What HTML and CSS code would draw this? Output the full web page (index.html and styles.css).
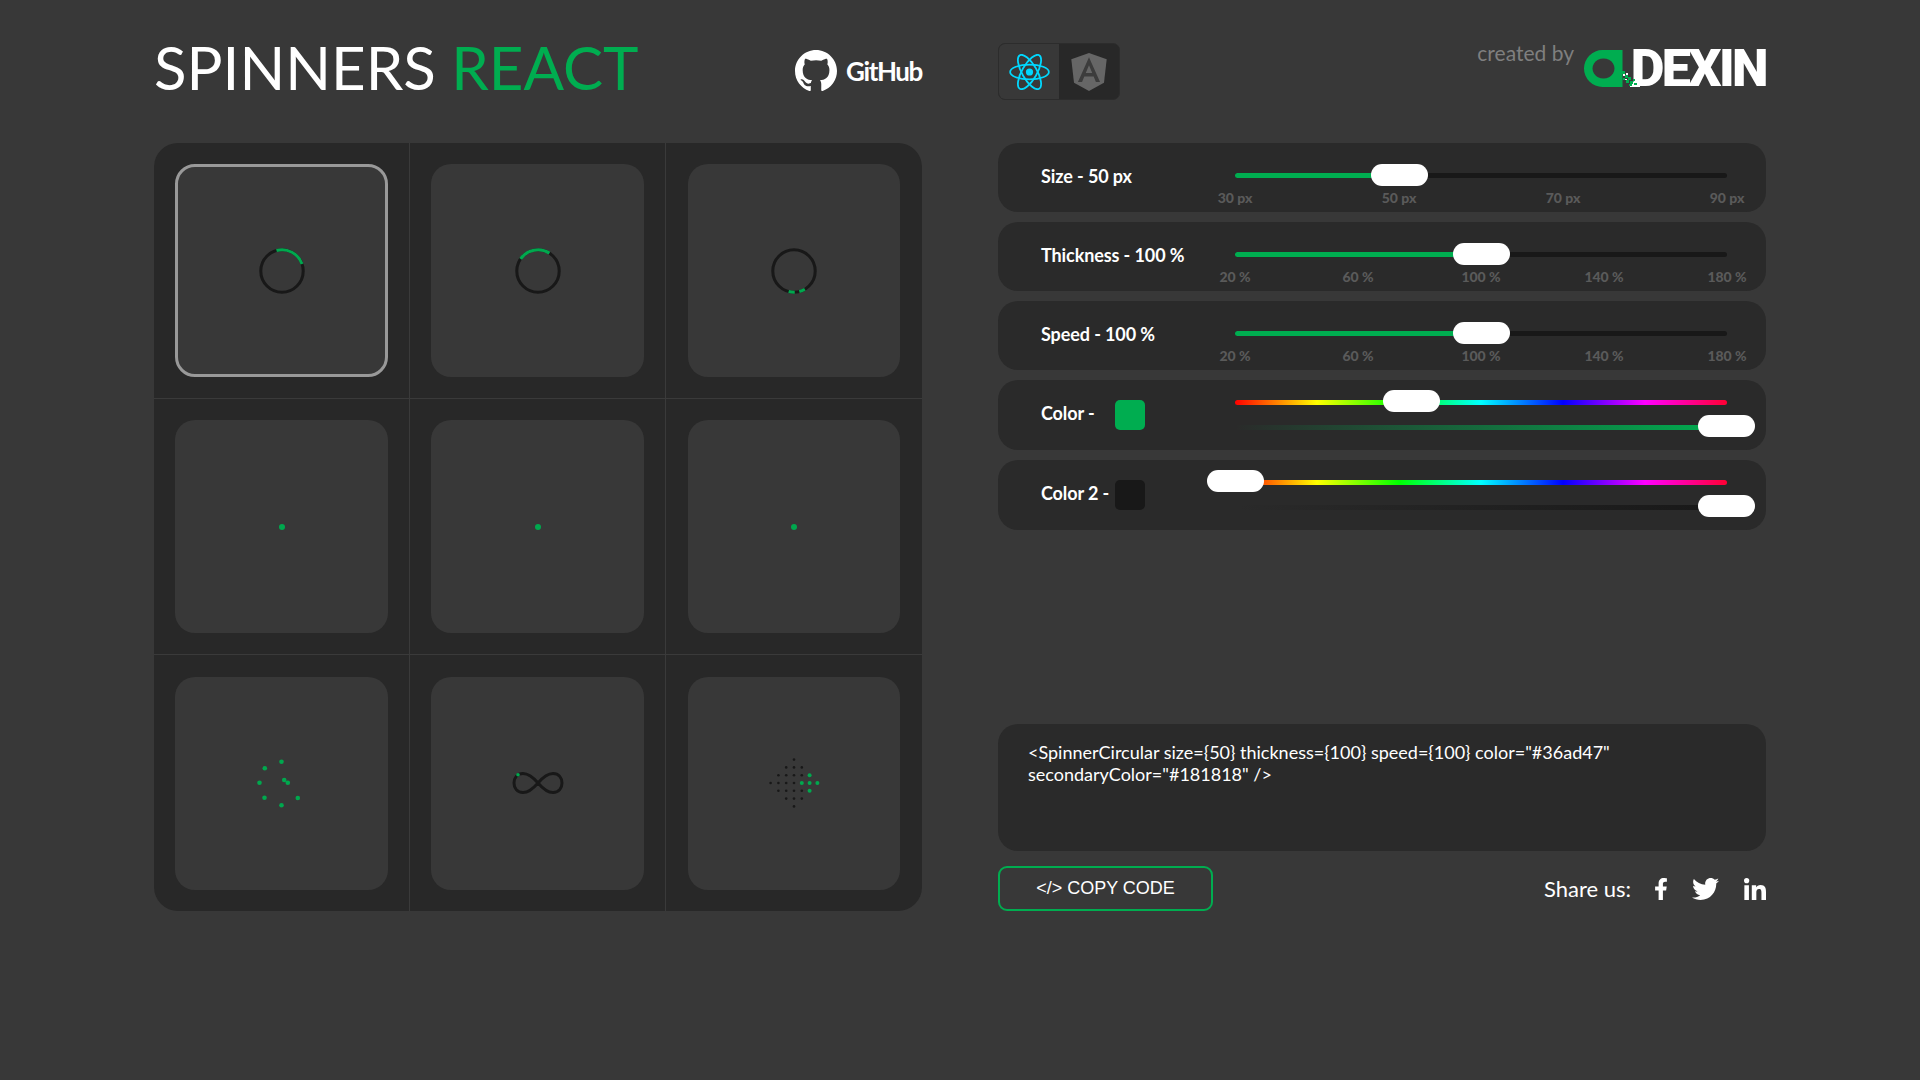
FILE: index.html
```html
<!DOCTYPE html>
<html lang="en">
	<head>
		<meta charset="UTF-8" />
		<title>Spinners React</title>
		<link rel="stylesheet" href="styles.css">
	</head>
	<body>
		<div class="page">
			<header class="head head-left">
				<h1 class="title">SPINNERS <span class="green">REACT</span></h1>
				<a class="github">
					<svg class="github-mark" viewBox="0 0 16 16"><path fill="#fff" d="M8 0C3.58 0 0 3.58 0 8c0 3.54 2.29 6.53 5.47 7.59.4.07.55-.17.55-.38 0-.19-.01-.82-.01-1.49-2.01.37-2.53-.49-2.69-.94-.09-.23-.48-.94-.82-1.13-.28-.15-.68-.52-.01-.53.63-.01 1.08.58 1.23.82.72 1.21 1.87.87 2.33.66.07-.52.28-.87.51-1.07-1.78-.2-3.64-.89-3.64-3.95 0-.87.31-1.59.82-2.15-.08-.2-.36-1.02.08-2.12 0 0 .67-.21 2.2.82.64-.18 1.32-.27 2-.27.68 0 1.36.09 2 .27 1.53-1.04 2.2-.82 2.2-.82.44 1.1.16 1.92.08 2.12.51.56.82 1.27.82 2.15 0 3.07-1.87 3.75-3.65 3.95.29.25.54.73.54 1.48 0 1.07-.01 1.93-.01 2.2 0 .21.15.46.55.38A8.013 8.013 0 0016 8c0-4.42-3.58-8-8-8z"/></svg>
					<span class="github-text">GitHub</span>
				</a>
			</header>

			<header class="head head-right">
				<div class="switch">
					<div class="switch-item active">
						<svg class="react-icon" viewBox="-11.5 -10.23 23 20.46">
							<circle r="2.05" fill="#00d8ff"/>
							<g fill="none" stroke="#00d8ff" stroke-width="1">
								<ellipse rx="11" ry="4.2"/>
								<ellipse rx="11" ry="4.2" transform="rotate(60)"/>
								<ellipse rx="11" ry="4.2" transform="rotate(120)"/>
							</g>
						</svg>
					</div>
					<div class="switch-item">
						<svg class="angular-icon" viewBox="31 30 188 200">
							<polygon fill="#666" points="125,30 31.9,63.2 46.1,186.3 125,230 203.9,186.3 218.1,63.2"/>
							<path fill="#3c3c3c" fill-rule="evenodd" d="M125 52.1L66.8 182.6h21.7l11.7-29.2h49.4l11.7 29.2H183zM142 135.4h-34l17-40.9z"/>
						</svg>
					</div>
				</div>
				<div class="credit">
					<span class="credit-text">created by</span>
					<span class="brand">
						<span class="brand-name">DEXIN</span>
						<svg class="brand-mark" viewBox="0 0 62 37">
							<path fill="#00ad50" fill-rule="evenodd" d="M18.500 0H38.500V37H18.500A18.500 18.500 0 0 1 18.500 0ZM19.500 8.500A11 10 0 1 0 19.510 8.500Z"/>
							<rect x="46" y="32" width="10" height="5" fill="#fff"/>
							<g fill="#00ad50">
								<rect x="38" y="21" width="3" height="3"/>
								<rect x="41" y="25" width="3" height="3"/>
								<rect x="39" y="28" width="2" height="2"/>
								<rect x="44" y="27" width="3" height="3"/>
								<rect x="42" y="30" width="3" height="3"/>
								<rect x="46" y="31" width="3" height="3"/>
								<rect x="49" y="29" width="2" height="2"/>
								<rect x="45" y="34" width="3" height="2"/>
								<rect x="50" y="33" width="3" height="2"/>
							</g>
							<g fill="#fff">
								<rect x="39" y="24" width="2" height="2"/>
								<rect x="42" y="23" width="2" height="2"/>
								<rect x="41" y="29" width="2" height="1"/>
							</g>
						</svg>
					</span>
				</div>
			</header>

			<section class="grid-panel">
				<div class="cell">
					<div class="card selected">
						<svg class="spinner" viewBox="0 0 66 66"><circle class="ring" cx="33" cy="33" r="28"/><circle class="arc" cx="33" cy="33" r="28" stroke-dasharray="41.5 134.4" transform="rotate(-105 33 33)"/></svg>
					</div>
				</div>
				<div class="cell">
					<div class="card">
						<svg class="spinner" viewBox="0 0 66 66"><circle class="ring" cx="33" cy="33" r="28"/><circle class="arc" cx="33" cy="33" r="28" stroke-dasharray="42.5 133.4" transform="rotate(-145 33 33)"/></svg>
					</div>
				</div>
				<div class="cell">
					<div class="card">
						<svg class="spinner" viewBox="0 0 66 66"><circle class="ring" cx="33" cy="33" r="28"/><circle class="arc" cx="33" cy="33" r="28" stroke-dasharray="8 6 8 154" transform="rotate(59.3 33 33)"/></svg>
					</div>
				</div>
				<div class="cell"><div class="card"><span class="dot"></span></div></div>
				<div class="cell"><div class="card"><span class="dot"></span></div></div>
				<div class="cell"><div class="card"><span class="dot"></span></div></div>
				<div class="cell">
					<div class="card">
						<svg class="spinner-free" viewBox="-30 -30 60 60" fill="#00a84e">
							<circle cx="-.5" cy="-21.3" r="2.3"/>
							<circle cx="-17.2" cy="-14.7" r="2.3"/>
							<circle cx="-22.5" cy="-.3" r="2.3"/>
							<circle cx="-17.5" cy="14.7" r="2.3"/>
							<circle cx="-.5" cy="22.3" r="2.3"/>
							<circle cx="15.8" cy="15" r="2.3"/>
							<circle cx="5.8" cy="-.3" r="2.3"/>
							<circle cx="2.2" cy="-3" r="2.3"/>
						</svg>
					</div>
				</div>
				<div class="cell">
					<div class="card">
						<svg class="spinner-free" viewBox="-30 -30 60 60">
							<path fill="none" stroke="#181818" stroke-width="3" d="M0 0C6-7 11-9.5 15-9.5 21-9.5 24-5 24 0 24 5 21 9.5 15 9.5 11 9.5 6 7 0 0-6-7-11-9.5-15-9.5-21-9.5-24-5-24 0-24 5-21 9.5-15 9.5-11 9.5-6 7 0 0Z"/>
							<circle cx="-20" cy="-8.3" r="1.8" fill="#00a84e"/>
						</svg>
					</div>
				</div>
				<div class="cell">
					<div class="card">
						<svg class="spinner-free" viewBox="-30 -30 60 60">
							<g fill="#181818">
								<circle cx="0" cy="-23.4" r="1.3"/>
								<circle cx="-7.8" cy="-15.6" r="1.3"/><circle cx="0" cy="-15.6" r="1.3"/><circle cx="7.8" cy="-15.6" r="1.3"/>
								<circle cx="-15.6" cy="-7.8" r="1.3"/><circle cx="-7.8" cy="-7.8" r="1.3"/><circle cx="0" cy="-7.8" r="1.3"/><circle cx="7.8" cy="-7.8" r="1.3"/>
								<circle cx="-23.4" cy="0" r="1.3"/><circle cx="-15.6" cy="0" r="1.3"/><circle cx="-7.8" cy="0" r="1.3"/><circle cx="0" cy="0" r="1.3"/>
								<circle cx="-15.6" cy="7.8" r="1.3"/><circle cx="-7.8" cy="7.8" r="1.3"/><circle cx="0" cy="7.8" r="1.3"/><circle cx="7.8" cy="7.8" r="1.3"/>
								<circle cx="-7.8" cy="15.6" r="1.3"/><circle cx="0" cy="15.6" r="1.3"/><circle cx="7.8" cy="15.6" r="1.3"/>
								<circle cx="0" cy="23.4" r="1.3"/>
							</g>
							<g fill="#00a84e">
								<circle cx="15.6" cy="-7.8" r="2"/>
								<circle cx="7.8" cy="0" r="2"/><circle cx="15.6" cy="0" r="2"/><circle cx="23.4" cy="0" r="2"/>
								<circle cx="15.6" cy="7.8" r="2"/>
							</g>
						</svg>
					</div>
				</div>
			</section>

			<section class="side">
				<div class="rows">
					<div class="row">
						<div class="label">Size - 50 px</div>
						<div class="control">
							<div class="track"><div class="fill" style="width: 33.5%"></div><div class="thumb" style="left: 33.5%"></div></div>
							<div class="marks"><span>30 px</span><span>50 px</span><span>70 px</span><span>90 px</span></div>
						</div>
					</div>
					<div class="row">
						<div class="label">Thickness - 100 %</div>
						<div class="control">
							<div class="track"><div class="fill" style="width: 50%"></div><div class="thumb" style="left: 50%"></div></div>
							<div class="marks"><span>20 %</span><span>60 %</span><span>100 %</span><span>140 %</span><span>180 %</span></div>
						</div>
					</div>
					<div class="row">
						<div class="label">Speed - 100 %</div>
						<div class="control">
							<div class="track"><div class="fill" style="width: 50%"></div><div class="thumb" style="left: 50%"></div></div>
							<div class="marks"><span>20 %</span><span>60 %</span><span>100 %</span><span>140 %</span><span>180 %</span></div>
						</div>
					</div>
					<div class="row row-color">
						<div class="label label-color">Color -</div>
						<div class="swatch swatch-green"></div>
						<div class="control control-color">
							<div class="track hue"><div class="thumb" style="left: 35.8%"></div></div>
							<div class="track alpha-green"><div class="thumb" style="left: 99.8%"></div></div>
						</div>
					</div>
					<div class="row row-color">
						<div class="label label-color">Color 2 -</div>
						<div class="swatch swatch-dark"></div>
						<div class="control control-color">
							<div class="track hue"><div class="thumb" style="left: 0%"></div></div>
							<div class="track alpha-dark"><div class="thumb" style="left: 99.8%"></div></div>
						</div>
					</div>
				</div>

				<div class="code">&lt;SpinnerCircular size={50} thickness={100} speed={100} color="#36ad47" secondaryColor="#181818" /&gt;</div>

				<div class="actions">
					<button class="copy">&lt;/&gt; COPY CODE</button>
					<div class="share">
						<span class="share-text">Share us:</span>
						<svg class="icon-f" viewBox="22 0 276 512"><path fill="#fff" d="M279.14 288l14.22-92.66h-88.91v-60.13c0-25.35 12.42-50.06 52.24-50.06h40.42V6.26S260.43 0 225.36 0c-73.22 0-121.08 44.38-121.08 124.72v70.62H22.89V288h81.39v224h100.17V288z"/></svg>
						<svg class="icon-t" viewBox="0 48 512 416"><path fill="#fff" d="M459.37 151.716c.325 4.548.325 9.097.325 13.645 0 138.72-105.583 298.558-298.558 298.558-59.452 0-114.68-17.219-161.137-47.106 8.447.974 16.568 1.299 25.34 1.299 49.055 0 94.213-16.568 130.274-44.832-46.132-.975-84.792-31.188-98.112-72.772 6.498.974 12.995 1.624 19.818 1.624 9.421 0 18.843-1.3 27.614-3.573-48.081-9.747-84.143-51.98-84.143-102.985v-1.299c13.969 7.797 30.214 12.67 47.431 13.319-28.264-18.843-46.781-51.005-46.781-87.391 0-19.492 5.197-37.36 14.294-52.954 51.655 63.675 129.3 105.258 216.365 109.807-1.624-7.797-2.599-15.918-2.599-24.04 0-57.828 46.782-104.934 104.934-104.934 30.213 0 57.502 12.67 76.67 33.137 23.715-4.548 46.456-13.32 66.599-25.34-7.798 24.366-24.366 44.833-46.132 57.827 21.117-2.273 41.584-8.122 60.426-16.243-14.292 20.791-32.161 39.308-52.628 54.253z"/></svg>
						<svg class="icon-in" viewBox="0 0 448 448"><path fill="#fff" d="M100.28 448H7.4V148.9h92.88zM53.79 108.1C24.09 108.1 0 83.5 0 53.8a53.79 53.79 0 0 1 107.58 0c0 29.7-24.1 54.3-53.79 54.3zM447.9 448h-92.68V302.4c0-34.7-.7-79.2-48.29-79.2-48.29 0-55.69 37.7-55.69 76.7V448h-92.78V148.9h89.08v40.8h1.3c12.4-23.5 42.69-48.3 87.88-48.3 94 0 111.28 61.9 111.28 142.3V448z"/></svg>
					</div>
				</div>
			</section>
		</div>
	</body>
</html>
```

FILE: styles.css
```css
body {
	margin: 0;
	background: #383838;
	color: white;
	font-family: "Lato", "Liberation Sans", sans-serif;
}
.page {
	display: grid;
	grid-template-columns: 768px 768px;
	grid-template-rows: 143px auto;
	column-gap: 76px;
	padding-left: 154px;
	min-height: 1080px;
	box-sizing: border-box;
	align-content: start;
}
.head {
	display: flex;
	justify-content: space-between;
	align-items: flex-start;
}

/* title + github */
.title {
	margin: 31px 0 0;
	font-size: 60px;
	font-weight: 400;
	line-height: 72px;
}
.green {
	color: #00ad50;
}
.github {
	display: flex;
	align-items: center;
	gap: 9px;
	margin-top: 50px;
}
.github-mark {
	width: 42px;
	height: 42px;
}
.github-text {
	width: 76px;
	font-size: 26px;
	font-weight: 700;
	letter-spacing: -1.4px;
	white-space: nowrap;
}

/* framework switch */
.switch {
	display: flex;
	width: 122px;
	height: 57px;
	margin-top: 43px;
	border: 1px solid #2c2c2c;
	border-radius: 7px;
	box-sizing: border-box;
	overflow: hidden;
	background: #282828;
}
.switch-item {
	flex: 1;
	display: flex;
	align-items: center;
	justify-content: center;
}
.switch-item.active {
	background: #383838;
}
.react-icon {
	width: 41px;
	height: 36px;
}
.angular-icon {
	width: 36px;
	height: 38px;
}

/* created by */
.credit {
	display: flex;
	align-items: flex-start;
	gap: 10px;
}
.credit-text {
	margin-top: 40px;
	font-size: 21px;
	color: #7f7f7f;
}
.brand {
	position: relative;
	display: block;
	width: 182px;
	height: 37px;
	margin-top: 50px;
	text-align: right;
}
.brand-name {
	font-family: "Roboto", "Liberation Sans", sans-serif;
	font-size: 52px;
	font-weight: 900;
	line-height: 37px;
	letter-spacing: -2.6px;
}
.brand-mark {
	position: absolute;
	left: 0;
	top: 0;
	width: 62px;
	height: 37px;
}

/* spinner grid */
.grid-panel {
	display: grid;
	grid-template-columns: repeat(3, 1fr);
	grid-template-rows: repeat(3, 1fr);
	height: 768px;
	background: #282828;
	border-radius: 24px;
	overflow: hidden;
}
.cell {
	display: flex;
	align-items: center;
	justify-content: center;
	border-right: 1px solid #3a3a3a;
	border-bottom: 1px solid #3a3a3a;
}
.cell:nth-child(3n) {
	border-right: none;
}
.cell:nth-child(n + 7) {
	border-bottom: none;
}
.card {
	display: flex;
	align-items: center;
	justify-content: center;
	width: 212.5px;
	height: 213px;
	background: #383838;
	border-radius: 20px;
	box-sizing: border-box;
}
.card.selected {
	border: 3px solid #999;
}
.spinner {
	width: 50px;
	height: 50px;
}
.spinner-free {
	width: 60px;
	height: 60px;
}
.ring,
.arc {
	fill: none;
	stroke-width: 4;
}
.ring {
	stroke: #181818;
}
.arc {
	stroke: #00a84e;
}
.dot {
	width: 6px;
	height: 6px;
	border-radius: 50%;
	background: #00a84e;
}

/* controls */
.rows {
	display: flex;
	flex-direction: column;
	gap: 10px;
}
.row {
	display: flex;
	height: 69px;
	padding-left: 43px;
	padding-right: 39px;
	background: #2a2a2a;
	border-radius: 20px;
	box-sizing: border-box;
}
.row-color {
	height: 70px;
}
.label {
	width: 194px;
	flex-shrink: 0;
	padding-top: 21px;
	font-size: 18px;
	font-weight: 700;
	line-height: 24px;
	letter-spacing: -0.1px;
}
.label-color {
	width: 72px;
	white-space: nowrap;
}
.control {
	flex: 1;
	padding-top: 30px;
}
.control-color {
	display: flex;
	flex-direction: column;
	gap: 20px;
	flex: none;
	width: 492px;
	margin-left: 90px;
	padding-top: 20px;
}
.track {
	position: relative;
	height: 5px;
	border-radius: 3px;
	background: #181818;
}
.control-color .thumb {
	top: -10px;
}
.fill {
	height: 100%;
	border-radius: 3px;
	background: #00ad50;
}
.thumb {
	position: absolute;
	top: -9px;
	width: 57px;
	height: 22px;
	margin-left: -28.5px;
	border-radius: 11px;
	background: white;
}
.marks {
	display: flex;
	justify-content: space-between;
	margin-top: 11px;
	font-size: 14px;
	font-weight: 900;
	line-height: 17px;
	color: #5a5a5a;
}
.marks span {
	display: flex;
	justify-content: center;
	width: 0;
	white-space: nowrap;
}
.swatch {
	width: 30px;
	height: 30px;
	margin-top: 20px;
	margin-left: 2px;
	border-radius: 5px;
}
.swatch-green {
	background: #00ad50;
}
.swatch-dark {
	background: #181818;
}
.hue {
	background: linear-gradient(to right, #ff0000, #ffff00, #00ff00, #00ffff, #0000ff, #ff00ff, #ff0033);
}
.alpha-green {
	background: linear-gradient(to right, rgba(0, 173, 80, 0), #00ad50);
}
.alpha-dark {
	background: linear-gradient(to right, rgba(24, 24, 24, 0), #181818);
}

/* code box */
.code {
	height: 127px;
	margin-top: 194px;
	padding: 17px 100px 0 30px;
	background: #2a2a2a;
	border-radius: 20px;
	box-sizing: border-box;
	font-size: 18px;
	line-height: 22px;
}
.actions {
	display: flex;
	justify-content: space-between;
	align-items: center;
	margin-top: 15px;
}
.copy {
	width: 215px;
	height: 45px;
	background: transparent;
	border: 2px solid #00ad50;
	border-radius: 9px;
	color: white;
	font-family: "Liberation Sans", sans-serif;
	font-size: 18px;
}
.share {
	display: flex;
	align-items: center;
}
.share-text {
	font-size: 22px;
	margin-right: 24px;
}
.icon-f {
	width: 12px;
	height: 22px;
	margin-right: 25px;
}
.icon-t {
	width: 27px;
	height: 22px;
	margin-right: 25px;
}
.icon-in {
	width: 22px;
	height: 22px;
}
```
